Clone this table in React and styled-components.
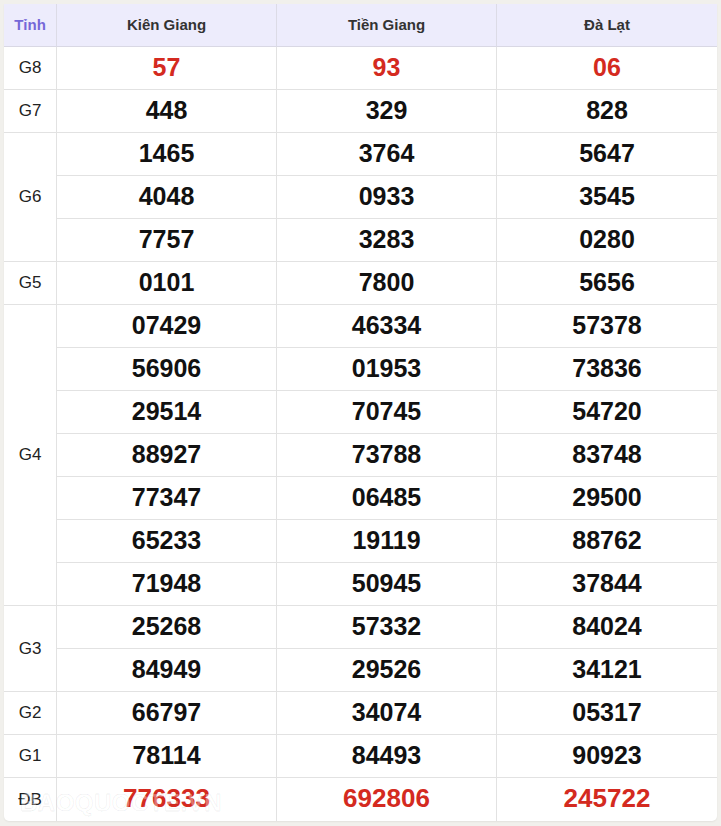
import React from 'react';
import styled, { createGlobalStyle } from 'styled-components';

const GlobalStyle = createGlobalStyle`
  html, body { margin: 0; padding: 0; background: #f1f0ec; }
  body { font-family: "Liberation Sans", Arial, sans-serif; }
`;

const Page = styled.div`
  padding: 4px 4px 5px 4px;
  width: 721px;
  box-sizing: border-box;
`;

const Card = styled.div`
  position: relative;
  width: 713px;
  background: #fff;
  border-radius: 0 0 5px 5px;
  overflow: hidden;
  box-shadow: 0 1px 2px rgba(0, 0, 0, 0.06);
`;

const Table = styled.table`
  width: 713px;
  border-collapse: separate;
  border-spacing: 0;
  table-layout: fixed;
`;

const HeadCell = styled.th`
  box-sizing: border-box;
  height: 43px;
  padding: 0 0 1px 0;
  background: #edecfc;
  border-bottom: 1px solid #d9d8e4;
  border-right: 1px solid #dcdbe6;
  font-size: 15px;
  font-weight: bold;
  color: ${p => (p.$accent ? '#7568d8' : '#333')};
  text-align: center;
  vertical-align: middle;
  &:last-child { border-right: none; }
`;

const LabelCell = styled.td`
  box-sizing: border-box;
  height: 43px;
  padding: 0;
  border-bottom: ${p => (p.$last ? 'none' : '1px solid #e2e2e2')};
  border-right: 1px solid #e2e2e2;
  font-size: 17px;
  color: #222;
  text-align: center;
  vertical-align: middle;
`;

const NumCell = styled.td`
  box-sizing: border-box;
  height: 43px;
  padding: 0 0 2px 0;
  border-bottom: ${p => (p.$last ? 'none' : '1px solid #e2e2e2')};
  border-right: 1px solid #e2e2e2;
  font-size: ${p => (p.$big ? '26px' : '25px')};
  font-weight: bold;
  color: ${p => (p.$red ? '#d42a20' : '#111')};
  text-align: center;
  vertical-align: middle;
  &:last-child { border-right: none; }
`;

const Watermark = styled.div`
  position: absolute;
  left: 16px;
  bottom: 4px;
  font-size: 24px;
  font-weight: bold;
  letter-spacing: 0.5px;
  color: rgba(255, 255, 255, 0.35);
  -webkit-text-stroke: 1px rgba(0, 0, 0, 0.06);
  pointer-events: none;
`;

const prizes = [
  { label: 'G8', red: true, rows: [['57', '93', '06']] },
  { label: 'G7', rows: [['448', '329', '828']] },
  { label: 'G6', rows: [['1465', '3764', '5647'], ['4048', '0933', '3545'], ['7757', '3283', '0280']] },
  { label: 'G5', rows: [['0101', '7800', '5656']] },
  {
    label: 'G4',
    rows: [
      ['07429', '46334', '57378'],
      ['56906', '01953', '73836'],
      ['29514', '70745', '54720'],
      ['88927', '73788', '83748'],
      ['77347', '06485', '29500'],
      ['65233', '19119', '88762'],
      ['71948', '50945', '37844'],
    ],
  },
  { label: 'G3', rows: [['25268', '57332', '84024'], ['84949', '29526', '34121']] },
  { label: 'G2', rows: [['66797', '34074', '05317']] },
  { label: 'G1', rows: [['78114', '84493', '90923']] },
  { label: 'ĐB', red: true, big: true, rows: [['776333', '692806', '245722']] },
];

export default function App() {
  return (
    <Page>
      <GlobalStyle />
      <Card>
        <Table>
          <colgroup>
            <col style={{ width: 53 }} />
            <col style={{ width: 220 }} />
            <col style={{ width: 220 }} />
            <col style={{ width: 220 }} />
          </colgroup>
          <thead>
            <tr>
              <HeadCell $accent>Tỉnh</HeadCell>
              <HeadCell>Kiên Giang</HeadCell>
              <HeadCell>Tiền Giang</HeadCell>
              <HeadCell>Đà Lạt</HeadCell>
            </tr>
          </thead>
          <tbody>
            {prizes.map((p, pi) =>
              p.rows.map((r, ri) => {
                const last = pi === prizes.length - 1;
                return (
                  <tr key={p.label + ri}>
                    {ri === 0 && (
                      <LabelCell rowSpan={p.rows.length} $last={last}>
                        {p.label}
                      </LabelCell>
                    )}
                    {r.map((n, ci) => (
                      <NumCell key={ci} $red={p.red} $big={p.big} $last={last}>
                        {n}
                      </NumCell>
                    ))}
                  </tr>
                );
              })
            )}
          </tbody>
        </Table>
        <Watermark>BAOQUOCTE.VN</Watermark>
      </Card>
    </Page>
  );
}
